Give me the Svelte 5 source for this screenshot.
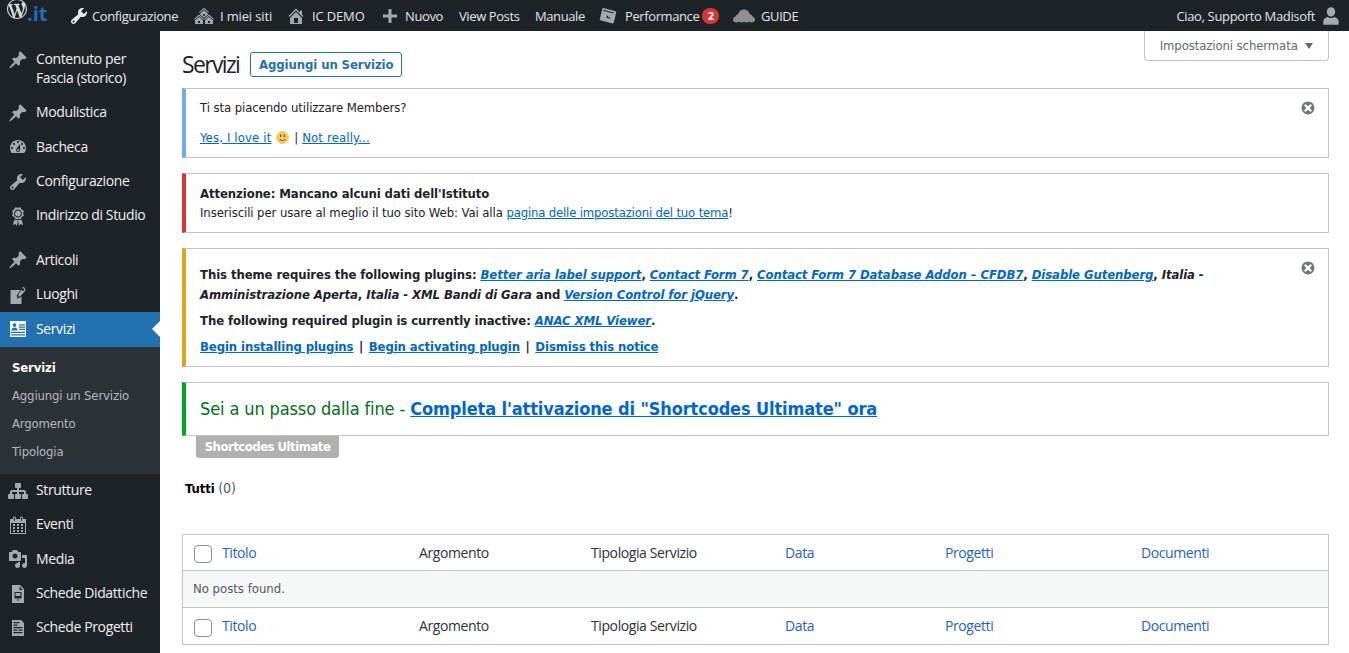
<script>
  const I = {
    wrench: "M16.68 9.77c-1.34 1.34-3.3 1.67-4.95.99l-5.41 6.52c-.99.99-2.59.99-3.58 0s-.99-2.59 0-3.57l6.52-5.42c-.68-1.65-.35-3.61.99-4.95 1.28-1.28 3.12-1.62 4.72-1.06l-2.89 2.89 2.82 2.82 2.86-2.87c.53 1.58.18 3.39-1.08 4.65zM3.81 16.21c.4.39 1.04.39 1.43 0 .4-.4.4-1.04 0-1.43-.39-.4-1.03-.4-1.43 0-.39.39-.39 1.03 0 1.43z",
    multi: "M14.27 6.87L10 3.14 5.73 6.87 5 6.14l5-4.38 5 4.38zM14 8.42l-4.05 3.43L6 8.38v-.74l4-3.5 4 3.5v.78zM11 9.7V8H9v1.7h2zm-1.73 4.03L5 10 .73 13.73 0 13l5-4.38L10 13zm10 0L15 10l-4.27 3.73L10 13l5-4.38L20 13zM5 11l4 3.5V18H1v-3.5zm10 0l4 3.5V18h-8v-3.5zM6 17v-2H4v2h2zm10 0v-2h-2v2h2z",
    home: "M16 8.5l1.53 1.53-1.06 1.06L10 4.62l-6.47 6.47-1.06-1.06L10 2.5l4 4v-2h2v4zm-6-2.46l6 5.99V18H4v-5.97zM12 17v-5H8v5h4z",
    plus: "M17 8.5v3h-5.5V17h-3v-5.5H3v-3h5.5V3h3v5.5z",
    box: "M5.500 2l12 3.200c.6.2.9.7.7 1.300l-2.500 10.200c-.2.6-.6.9-1.200.8L2.500 14.300c-.6-.2-.9-.7-.7-1.300L4.300 2.800c.2-.6.6-.9 1.200-.8zM5 4.700l10.500 2.800.2-.9L5.300 3.800zM9 9.500l-.6 2.300 3.800 1 .3-1.100-2.500-.7.2-1.200z",
    cloud: "M3.200 16.500C1.400 16.500 0 15.100 0 13.400c0-1.500 1-2.700 2.400-3 .3-1.100 1.100-1.900 2.200-2.100C5.200 5.500 7.400 3.500 10 3.500s4.800 2 5.400 4.800c1.100.2 1.900 1 2.200 2.100 1.400.3 2.400 1.500 2.400 3 0 1.700-1.400 3.100-3.200 3.100-.9 0-1.700-.3-2.300-.9-.6.600-1.400.9-2.300.9-.8 0-1.600-.3-2.200-.8-.6.500-1.400.8-2.200.8-.9 0-1.700-.3-2.300-.9-.6.600-1.400.9-2.300.9z",
    user: "M10 2c2.200 0 3.800 1.900 3.800 4.200S12.200 10.500 10 10.500 6.200 8.500 6.200 6.200 7.800 2 10 2zm-2.800 8.800c.7.600 1.700 1 2.800 1s2.100-.4 2.800-1c2.300.5 4.200 1.900 4.200 4.200v3H3v-3c0-2.300 1.900-3.700 4.200-4.200z",
    pin: "M10.44 3.02l1.82-1.82 6.36 6.35-1.83 1.82c-1.05-.68-2.48-.57-3.41.36l-.75.75c-.92.93-1.04 2.35-.35 3.41l-1.83 1.82-2.41-2.41-2.8 2.79c-.42.42-3.38 2.71-3.8 2.29s1.86-3.39 2.28-3.81l2.79-2.79L4.1 9.36l1.83-1.82c1.05.69 2.48.57 3.41-.36l.75-.75c.93-.92 1.04-2.35.35-3.41z",
    dash: "M3.76 16h12.48c1.1-1.37 1.76-3.11 1.76-5 0-4.42-3.58-8-8-8s-8 3.58-8 8c0 1.89.66 3.63 1.76 5zM10 4c.55 0 1 .45 1 1s-.45 1-1 1-1-.45-1-1 .45-1 1-1zM6 6c.55 0 1 .45 1 1s-.45 1-1 1-1-.45-1-1 .45-1 1-1zm8 0c.55 0 1 .45 1 1s-.45 1-1 1-1-.45-1-1 .45-1 1-1zm-5.37 5.55L12 7v6c0 1.1-.9 2-2 2s-2-.9-2-2c0-.57.24-1.08.63-1.45zM4 10c.55 0 1 .45 1 1s-.45 1-1 1-1-.45-1-1 .45-1 1-1zm12 0c.55 0 1 .45 1 1s-.45 1-1 1-1-.45-1-1 .45-1 1-1zm-5 3c0-.55-.45-1-1-1s-1 .45-1 1 .45 1 1 1 1-.45 1-1z",
    award: "M4.200 4.700L4.800 7.200l-.6 2.500 2.200 1.400L7.500 13.300l2.500-.6 2.500.6 1.100-2.200 2.200-1.400-.6-2.500.6-2.500-2.200-1.300-1.300-2.200-2.500.6-2.500-.6-1.300 2.200zM10 11.500c-2.200 0-4-1.800-4-4s1.800-4 4-4 4 1.800 4 4-1.800 4-4 4zm0-1c1.660 0 3-1.340 3-3s-1.340-3-3-3-3 1.340-3 3 1.340 3 3 3zM6.300 13.500L5 19l2.500-1 1.500 2 1-6.300-2.300.5zM13.700 13.500L15 19l-2.500-1-1.500 2-1-6.300 2.300.5z",
    place: "M2.500 5H12.500L9 10.200c-.5.8-.3 1.700.3 2.300v1.600L11 12.600c.6.200 1.300 0 1.700-.5l.8-1.100V19h-11zM14.800 2c1.600.2 2.700 1.600 2.500 3.200-.1.500-.3 1-.6 1.400l-4.300 4.400c-.4.300-.9.300-1.300 0l-1 1.100-.5-.5 1-1.100c-.3-.4-.3-.9 0-1.300l3.200-5c.2-1.300 1.400-2.200 2.700-2.100zm.1 1.300c-.7 0-1.300.6-1.300 1.300s.6 1.300 1.300 1.300 1.300-.6 1.300-1.300-.6-1.300-1.300-1.300z",
    id: "M2 2h16v16H2zM3 15.200v1.300h14v-1.300zM3 12.800v1.200h14v-1.200zM11 9.800V11h6V9.800zM11 7.500v1.200h6V7.500zM11 5.200v1.200h6V5.200zM6.500 4.200c-1 0-1.800.8-1.800 1.800S5.500 7.900 6.500 7.900 8.300 7 8.300 6 7.500 4.200 6.500 4.200zM3.500 11.500h6c0-1.800-1.200-3-3-3s-3 1.200-3 3z",
    org: "M18 13h1c.55 0 1 .45 1 1.010v2.980c0 .56-.45 1.010-1 1.010h-4c-.55 0-1-.45-1-1.010v-2.980c0-.56.45-1.010 1-1.010h1v-2h-5v2h1c.55 0 1 .45 1 1.010v2.980c0 .56-.45 1.010-1 1.010H8c-.55 0-1-.45-1-1.010v-2.980c0-.56.45-1.010 1-1.010h1v-2H4v2h1c.55 0 1 .45 1 1.010v2.980C6 17.550 5.550 18 5 18H1c-.55 0-1-.45-1-1.010v-2.980C0 13.450.45 13 1 13h1v-2c0-1.100.9-2 2-2h5V7H8c-.55 0-1-.45-1-1.010V3.010C7 2.450 7.450 2 8 2h4c.55 0 1 .45 1 1.010v2.980C13 6.550 12.550 7 12 7h-1v2h5c1.100 0 2 .9 2 2v2z",
    cal: "M15 4h3v15H2V4h3V3c0-.41.15-.76.44-1.06.29-.29.65-.44 1.06-.44s.77.15 1.06.44c.29.3.44.65.44 1.06v1h4V3c0-.41.15-.76.44-1.06.29-.29.65-.44 1.06-.44s.77.15 1.06.44c.29.3.44.65.44 1.06v1zM6 3v2.500c0 .14.05.26.15.36.09.09.21.14.35.14s.26-.05.35-.14c.1-.1.15-.22.15-.36V3c0-.14-.05-.26-.15-.35-.09-.1-.21-.15-.35-.15s-.26.05-.35.15c-.1.09-.15.21-.15.35zm7 0v2.500c0 .14.05.26.14.36.1.09.22.14.36.14s.26-.05.36-.14c.09-.1.14-.22.14-.36V3c0-.14-.05-.26-.14-.35-.1-.1-.22-.15-.36-.15s-.26.05-.36.15c-.09.09-.14.21-.14.35zm4 15V8H3v10h14zM7 9v2H5V9h2zm2 0h2v2H9V9zm4 2V9h2v2h-2zm-6 1v2H5v-2h2zm2 0h2v2H9v-2zm4 2v-2h2v2h-2zm-6 1v2H5v-2h2zm4 2H9v-2h2v2zm4 0h-2v-2h2v2z",
    media: "M13 11V4c0-.55-.45-1-1-1h-1.670L9 1H5L3.670 3H2c-.55 0-1 .45-1 1v7c0 .55.45 1 1 1h10c.55 0 1-.45 1-1zM7 4.500c1.380 0 2.500 1.120 2.500 2.500S8.380 9.500 7 9.500 4.500 8.380 4.500 7 5.620 4.500 7 4.500zM14 6h5v10.500c0 1.380-1.120 2.500-2.500 2.500S14 17.880 14 16.500s1.120-2.500 2.500-2.500c.17 0 .34.02.5.05V9h-3V6zm-4 8.050V13h2v3.500c0 1.380-1.120 2.500-2.500 2.500S7 17.880 7 16.500 8.120 14 9.500 14c.17 0 .34.02.5.05z",
    doc: "M4 1h8l4 4v14H4zM11.500 2.500V6h3.500zM6.500 8v6.500h7V8zM7.500 9h5v3h-5zM9 15.500h2v1H9z",
    list: "M4 2h9l3 3v13H4zM5.500 4v1.200h6V4zM5.500 6.500v1.200h4V6.500zM5.500 9v1.200h9V9zM5.500 11.500v1.200h4v-1.200zM5.500 14v1.200h9V14zM10.500 11.500v1.200h4v-1.200z",
    logo: "M20 10c0-5.510-4.490-10-10-10C4.480 0 0 4.490 0 10c0 5.520 4.480 10 10 10 5.510 0 10-4.480 10-10zM7.780 15.370L4.370 6.220c.55-.02 1.170-.08 1.170-.08.5-.06.44-1.130-.06-1.110 0 0-1.450.11-2.370.11-.18 0-.37 0-.58-.01C4.120 2.690 6.870 1.110 10 1.110c2.330 0 4.450.87 6.050 2.340-.68-.11-1.650.39-1.650 1.580 0 .74.45 1.360.9 2.100.35.61.55 1.360.55 2.460 0 1.490-1.400 5-1.400 5l-3.030-8.370c.54-.02.82-.17.82-.17.5-.05.44-1.250-.06-1.220 0 0-1.440.12-2.380.12-.87 0-2.330-.12-2.330-.12-.5-.03-.56 1.200-.06 1.220l.92.08 1.260 3.410zM17.410 10c.24-.64.74-1.870.43-4.250.7 1.290 1.050 2.710 1.050 4.250 0 3.290-1.730 6.240-4.400 7.780.97-2.590 1.940-5.200 2.920-7.780zM6.100 18.090C3.120 16.650 1.110 13.530 1.110 10c0-1.300.23-2.480.72-3.590C3.250 10.300 4.670 14.200 6.100 18.090zm4.030-6.630l2.580 6.980c-.86.29-1.760.45-2.710.45-.79 0-1.570-.11-2.290-.33.81-2.380 1.620-4.740 2.420-7.100z",
    close: "M10 2c4.420 0 8 3.580 8 8s-3.580 8-8 8-8-3.580-8-8 3.580-8 8-8zm5 11l-3-3 3-3-2-2-3 3-3-3-2 2 3 3-3 3 2 2 3-3 3 3z"
  };
  const barLeft = [
    { icon: "wrench", label: "Configurazione", cls: "w-conf" },
    { icon: "multi", label: "I miei siti", cls: "w-siti" },
    { icon: "home", label: "IC DEMO", cls: "w-demo" },
    { icon: "plus", label: "Nuovo", cls: "w-new" },
    { label: "View Posts", cls: "w-view" },
    { label: "Manuale", cls: "w-man" },
    { icon: "box", label: "Performance", badge: "2", cls: "w-perf" },
    { icon: "cloud", label: "GUIDE", cls: "w-guide" }
  ];
  const menuA = [
    { icon: "pin", label: "Contenuto per Fascia (storico)" },
    { icon: "pin", label: "Modulistica" },
    { icon: "dash", label: "Bacheca" },
    { icon: "wrench", label: "Configurazione" },
    { icon: "award", label: "Indirizzo di Studio" }
  ];
  const menuB = [
    { icon: "pin", label: "Articoli" },
    { icon: "place", label: "Luoghi" }
  ];
  const sub = ["Servizi", "Aggiungi un Servizio", "Argomento", "Tipologia"];
  const menuC = [
    { icon: "org", label: "Strutture" },
    { icon: "cal", label: "Eventi" },
    { icon: "media", label: "Media" },
    { icon: "doc", label: "Schede Didattiche" },
    { icon: "list", label: "Schede Progetti" },
    { icon: "pin", label: "" }
  ];
  const cols = [
    { t: "Titolo", link: true },
    { t: "Argomento" },
    { t: "Tipologia Servizio" },
    { t: "Data", link: true },
    { t: "Progetti", link: true },
    { t: "Documenti", link: true }
  ];
</script>

{#snippet icon(name, cls)}
  <svg class={cls} viewBox="0 0 20 20" aria-hidden="true"><path fill-rule="evenodd" d={I[name]} /></svg>
{/snippet}

{#snippet menuItem(it)}
  <li class="item">{@render icon(it.icon, "mi")}<span>{it.label}</span></li>
{/snippet}

{#snippet headRow()}
  <td class="cb"><span class="box"></span></td>
  {#each cols as c}
    <td class:lnk={c.link}>{c.t}</td>
  {/each}
{/snippet}

<div class="page">
  <header class="bar">
    <div class="logo">
      <svg viewBox="0 0 20 20" aria-hidden="true"><path fill-rule="evenodd" d={I.logo} /></svg>
      <span class="it">.it</span>
    </div>
    <ul class="bar-left">
      {#each barLeft as b}
        <li class={b.cls}>
          {#if b.icon}{@render icon(b.icon, "bi")}{/if}
          <span>{b.label}</span>
          {#if b.badge}<em class="badge">{b.badge}</em>{/if}
        </li>
      {/each}
    </ul>
    <div class="bar-right">
      <span>Ciao, Supporto Madisoft</span>
      {@render icon("user", "bi avatar")}
    </div>
  </header>

  <div class="main">
    <nav class="side">
      <ul>
        {#each menuA as it}{@render menuItem(it)}{/each}
      </ul>
      <ul class="group">
        {#each menuB as it}{@render menuItem(it)}{/each}
        <li class="item active">
          {@render icon("id", "mi")}<span>Servizi</span>
        </li>
      </ul>
      <ul class="sub">
        {#each sub as s, i}
          <li class:cur={i === 0}>{s}</li>
        {/each}
      </ul>
      <ul>
        {#each menuC as it}{@render menuItem(it)}{/each}
      </ul>
    </nav>

    <main class="content">
      <button class="screen" type="button">Impostazioni schermata <i class="caret"></i></button>

      <div class="title">
        <h1>Servizi</h1>
        <a class="add" href="#a">Aggiungi un Servizio</a>
      </div>

      <section class="notice blue n1">
        {@render icon("close", "x")}
        <p>Ti sta piacendo utilizzare Members?</p>
        <p class="love"><a href="#a">Yes, I love it</a>
          <svg class="smile" viewBox="0 0 13 13" aria-hidden="true">
            <circle cx="6.500" cy="6.500" r="6.500" fill="#f5c860" />
            <rect x="4" y="3.500" width="1.200" height="2.500" fill="#6b5320" />
            <rect x="7.800" y="3.500" width="1.200" height="2.500" fill="#6b5320" />
            <path d="M3.500 8c1 2 5 2 6 0" fill="none" stroke="#6b5320" stroke-width="1" />
          </svg>
          | <a href="#a">Not really...</a></p>
      </section>

      <section class="notice red n2">
        <p><b>Attenzione: Mancano alcuni dati dell'Istituto</b></p>
        <p>Inseriscili per usare al meglio il tuo sito Web: Vai alla <a href="#a">pagina delle impostazioni del tuo tema</a>!</p>
      </section>

      <section class="notice amber n3">
        {@render icon("close", "x")}
        <div class="two">
          <div class="ln"><b>This theme requires the following plugins: <a href="#a"><i>Better aria label support</i></a>, <a href="#a"><i>Contact Form 7</i></a>, <a href="#a"><i>Contact Form 7 Database Addon – CFDB7</i></a>, <a href="#a"><i>Disable Gutenberg</i></a>, <i>Italia -</i></b></div>
          <div class="ln"><b><i>Amministrazione Aperta</i>, <i>Italia - XML Bandi di Gara</i> and <a href="#a"><i>Version Control for jQuery</i></a>.</b></div>
        </div>
        <p><b>The following required plugin is currently inactive: <a href="#a"><i>ANAC XML Viewer</i></a>.</b></p>
        <p><b><a href="#a">Begin installing plugins</a> <span class="sep">|</span> <a href="#a">Begin activating plugin</a> <span class="sep">|</span> <a href="#a">Dismiss this notice</a></b></p>
      </section>

      <section class="notice green n4">
        <p>Sei a un passo dalla fine - <a href="#a"><b>Completa l'attivazione di "Shortcodes Ultimate" ora</b></a></p>
      </section>
      <div class="tag">Shortcodes Ultimate</div>

      <div class="views"><b>Tutti</b> <span>(0)</span></div>

      <table>
        <thead><tr>{@render headRow()}</tr></thead>
        <tbody><tr><td colspan="7" class="empty">No posts found.</td></tr></tbody>
        <tfoot><tr>{@render headRow()}</tr></tfoot>
      </table>
    </main>
  </div>
</div>

<style>
  :global(body) { margin: 0; background: #fff; }
  ul { list-style: none; margin: 0; padding: 0; }
  p { margin: 0; }
  a { color: #06c; }
  .page {
    height: 100vh; overflow: hidden; display: flex; flex-direction: column;
    font-family: "DejaVu Sans Condensed", "DejaVu Sans", sans-serif;
  }
  .bar {
    height: 31px; flex: none; background: #1d2327; color: #e4e5e6;
    display: flex; align-items: center; font-family: "Open Sans", sans-serif;
    font-size: 13px; letter-spacing: -0.4px;
  }
  .logo { width: 69px; height: 31px; position: relative; flex: none; color: #c8cacc; }
  .logo svg { position: absolute; left: 7px; top: -1px; width: 20px; height: 20px; fill: #d8d9da; }
  .it {
    position: absolute; left: 27px; top: 1px; color: #1f6fc0; font: 700 20px/26px "Open Sans", sans-serif; letter-spacing: 0;
  }
  .bar-left { display: flex; align-items: center; flex: 1; }
  .bar-left li { display: flex; align-items: center; flex: none; }
  .bi { width: 20px; height: 20px; fill: #a7aaad; margin-right: 4px; flex: none; }
  .w-conf { width: 125px; }
  .w-conf span { margin-left: -1px; }
  .w-siti { width: 92px; letter-spacing: -0.15px; }
  .w-siti .bi { margin-right: 6px; }
  .w-demo { width: 94px; letter-spacing: -0.15px; }
  .w-demo .bi { margin-right: 6px; }
  .w-new { width: 79px; }
  .w-new .bi { margin-right: 5px; }
  .w-view { width: 76px; }
  .w-man { width: 63px; }
  .w-perf { width: 135px; }
  .w-conf .bi { fill: #e8e8e8; }
  .w-perf .bi { margin-right: 7px; }
  .w-guide .bi { fill: #8f8f90; width: 22px; margin-right: 6px; transform: scaleX(1.1); }
  .badge {
    font: 700 11px/16px "Open Sans", sans-serif; letter-spacing: 0; color: #fff; background: #d63638;
    border-radius: 9px; width: 17px; height: 16px; text-align: center; margin-left: 3px;
  }
  .bar-right { display: flex; align-items: center; padding-right: 7px; letter-spacing: -0.34px; }
  .avatar { margin: 0 0 0 5px; width: 22px; height: 22px; }
  .main { flex: 1; display: flex; min-height: 0; }
  .side {
    width: 160px; flex: none; background: #1d2327; color: #f0f0f1; padding-top: 12px;
    font-family: "Open Sans", sans-serif; font-size: 14px; letter-spacing: -0.38px; overflow: hidden;
  }
  .item { display: flex; padding: 7.4px 8px 8.6px 36px; line-height: 18.4px; position: relative; }
  .mi { position: absolute; left: 8px; top: 7px; width: 20px; height: 20px; fill: #a7aaad; }
  .group { margin-top: 10px; }
  .active { background: #2271b1; color: #fff; }
  .active .mi { fill: #fff; }
  .active::after {
    content: ""; position: absolute; right: 0; top: 50%; margin-top: -8px;
    border: 8px solid transparent; border-right-color: #fff; border-left-width: 0;
  }
  .sub {
    background: #2c3338; padding: 7px 0 8px 12px; line-height: 28px; color: #b4b9be;
    font-family: "DejaVu Sans Condensed", "DejaVu Sans", sans-serif;
    font-size: 13px; letter-spacing: -0.15px;
  }
  .cur { color: #fff; font-weight: 700; }
  .content { flex: 1; min-width: 0; position: relative; padding: 21px 20px 0 22px; font-size: 13px; letter-spacing: -0.09px; color: #1d2327; }
  .screen {
    position: absolute; right: 20px; top: 0; width: 185px; height: 30px; background: #fff;
    border: 1px solid #c3c4c7; border-top: 0; border-radius: 0 0 4px 4px; color: #646970;
    font: 13px "DejaVu Sans Condensed", "DejaVu Sans", sans-serif; letter-spacing: -0.1px; padding: 0;
  }
  .caret {
    display: inline-block; margin-left: 4px; border: 4.5px solid transparent; border-top: 6px solid #646970;
    border-bottom: 0; vertical-align: 1px;
  }
  .title { display: flex; align-items: center; height: 25px; margin-bottom: 11px; }
  h1 {
    font: 400 23px/25px "Open Sans", sans-serif; letter-spacing: -1.65px; margin: 0 11px 0 0; color: #1d2327;
  }
  .add {
    box-sizing: border-box; height: 25px; width: 152px; border: 1px solid #2271b1; border-radius: 3px;
    color: #2271b1; text-decoration: none; font-weight: 700; line-height: 23px; text-align: center;
  }
  .notice {
    position: relative; background: #fff; border: 1px solid #c3c4c7; border-left-width: 4px;
    padding: 0 14px; margin-bottom: 15px; box-sizing: border-box;
  }
  .blue { border-left-color: #72aee6; }
  .red { border-left-color: #d63638; }
  .amber { border-left-color: #dba617; }
  .green { border-left-color: #00a32a; }
  .n1 { padding-top: 10px; padding-bottom: 10px; line-height: 18px; }
  .n1 p + p { margin-top: 12px; }
  .love { letter-spacing: 0.15px; }
  .n2 { padding-top: 10px; padding-bottom: 10px; line-height: 19px; }
  .n2 a { letter-spacing: -0.17px; }
  .n3 { padding-top: 16px; padding-bottom: 9px; line-height: 20px; padding-right: 40px; }
  .n3 p { margin-top: 6px; }
  .ln { white-space: nowrap; }
  .sep { margin: 0 1.600px; }
  .n4 {
    height: 54px; display: flex; align-items: center; margin-bottom: 0; padding-bottom: 2px; font-size: 18px; letter-spacing: -0.12px; color: #007017;
  }
  .x { position: absolute; right: 12px; top: 11px; width: 16px; height: 16px; fill: #72777c; }
  .smile { display: inline-block; width: 13px; height: 13px; vertical-align: -2px; margin: 0 1px; }
  .tag {
    margin-left: 14px; width: 143px; height: 22px; background: #b0b0b0; color: #fff;
    font-weight: 700; line-height: 22px; text-align: center; border-radius: 0 0 3px 3px; letter-spacing: -0.5px;
  }
  .views { margin: 20px 0 38px 3px; padding-top: 1px; line-height: 18px; height: 17px; color: #000; }
  .views span { color: #50575e; font-size: 14px; }
  table {
    width: 100%; border-collapse: separate; border-spacing: 0; border: 1px solid #c3c4c7; table-layout: fixed;
    font-family: "Open Sans", sans-serif; font-size: 14px; letter-spacing: -0.4px; color: #2c3338;
  }
  td { padding: 0 10px; height: 36px; box-sizing: border-box; }
  thead td { border-bottom: 1px solid #c3c4c7; }
  tfoot td { border-top: 1px solid #c3c4c7; height: 37px; padding-bottom: 1px; }
  .cb { width: 29px; padding: 2px 0 0 11px; }
  tfoot .cb { padding: 3px 0 0 11px; }
  td:nth-child(2) { width: 197px; }
  td:nth-child(3) { width: 172px; }
  td:nth-child(4) { width: 194px; }
  td:nth-child(5) { width: 160px; }
  td:nth-child(6) { width: 196px; }
  .box {
    display: block; box-sizing: border-box; width: 18px; height: 18px; border: 1px solid #8c8f94; border-radius: 4px; background: #fff;
  }
  .lnk { color: #1f5fd0; }
  .empty {
    background: #f6f7f7; font: 13px "DejaVu Sans Condensed", "DejaVu Sans", sans-serif; letter-spacing: 0; color: #50575e; padding-bottom: 2px;
  }
</style>
